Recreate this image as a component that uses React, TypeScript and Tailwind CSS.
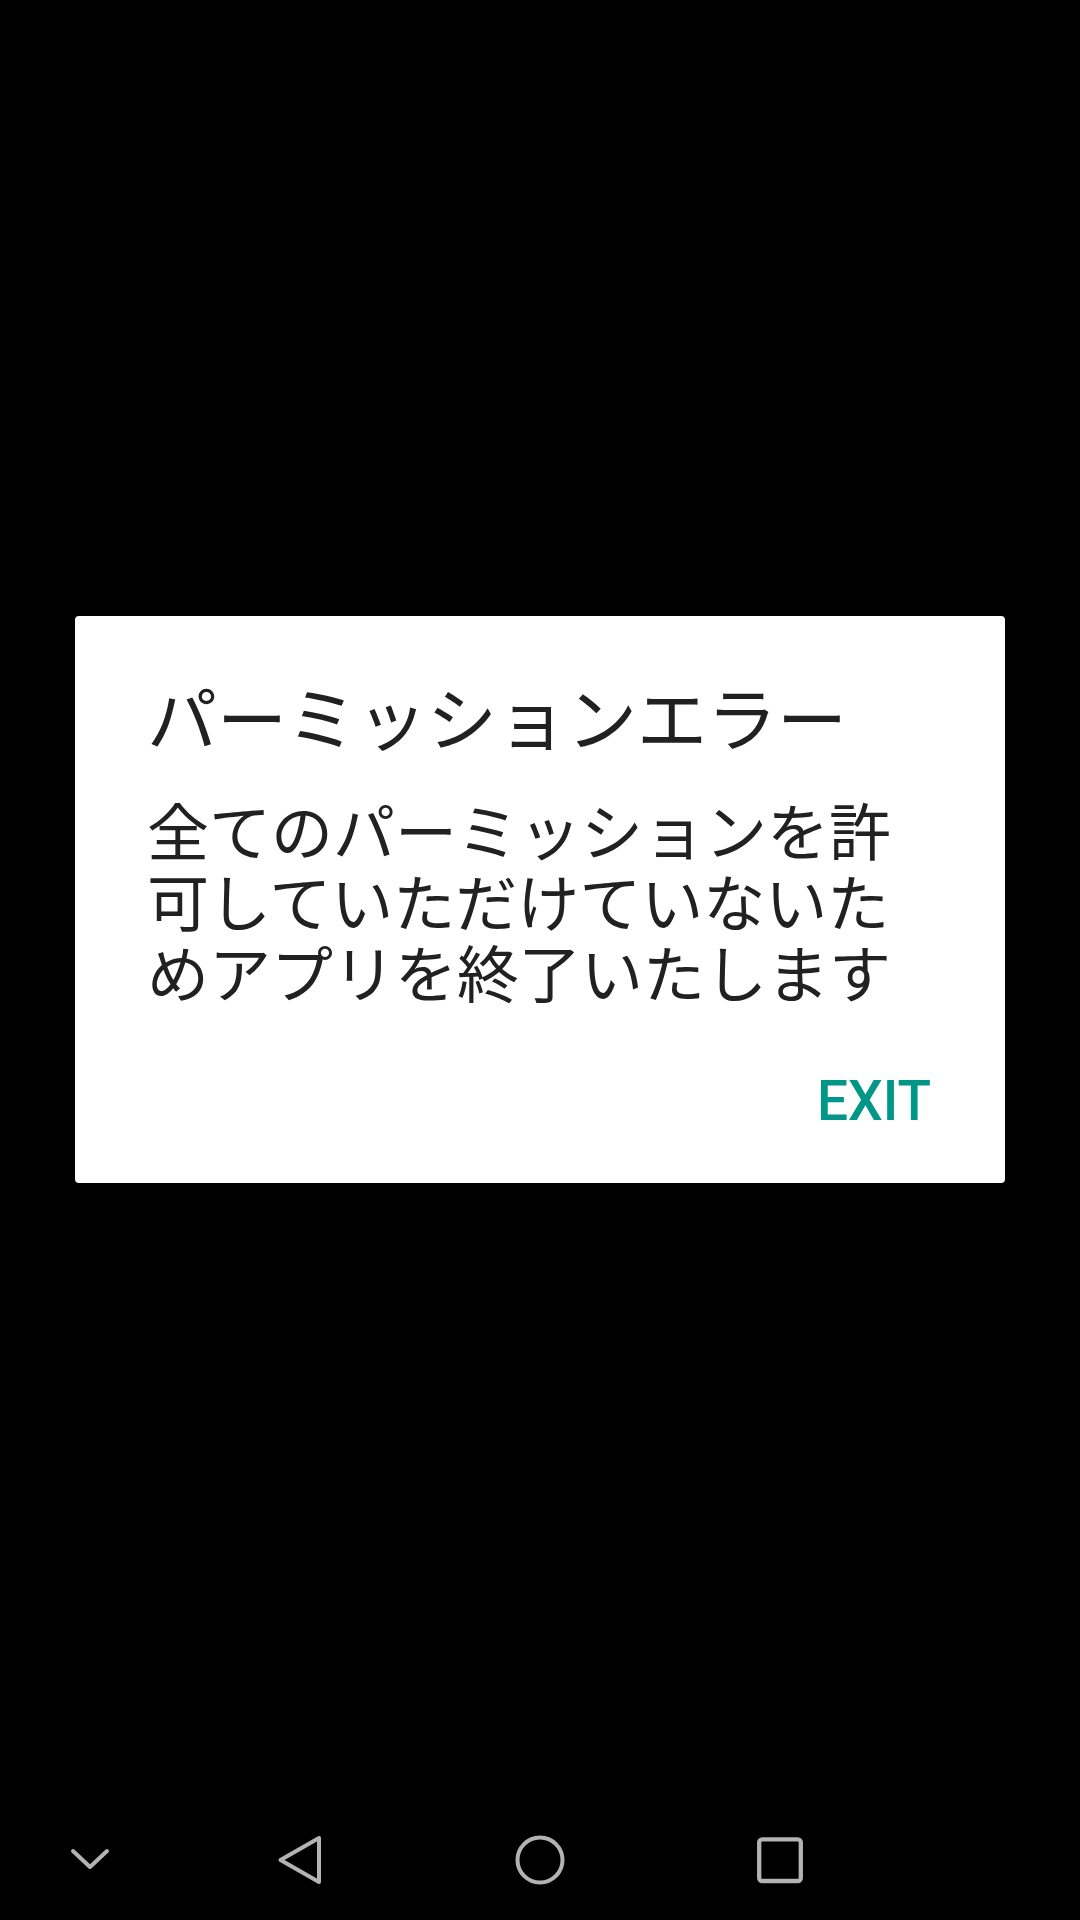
import React from "react";

function NavBar() {
  const c = "#b3b3b3";
  return (
    <div className="h-[120px] flex items-center pl-[70px]">
      <svg width="40" height="40" viewBox="0 0 40 40" className="overflow-visible">
        <polyline points="3,11 20,27 37,11" fill="none" stroke={c} strokeWidth="4" strokeLinecap="round" strokeLinejoin="round" />
      </svg>
      <div className="ml-[166px] flex items-center gap-[192px]">
        <svg width="48" height="48" viewBox="0 0 48 48" className="overflow-visible">
          <polygon points="4.5,24 43,2 43,46" fill="none" stroke={c} strokeWidth="4" strokeLinejoin="round" />
        </svg>
        <svg width="48" height="48" viewBox="0 0 48 48" className="overflow-visible">
          <circle cx="24" cy="24" r="22.5" fill="none" stroke={c} strokeWidth="4" />
        </svg>
        <svg width="48" height="48" viewBox="0 0 48 48" className="overflow-visible">
          <rect x="3.2" y="3.3" width="41.6" height="41.7" rx="3" fill="none" stroke={c} strokeWidth="4.3" />
        </svg>
      </div>
    </div>
  );
}

export default function App() {
  return (
    <div className="w-[1080px] h-[1920px] bg-black flex flex-col overflow-hidden">
      <div className="flex-1 pt-[616px] pl-[75px]">
        <div
          className="w-[930px] h-[567px] bg-white rounded-[4px] flex flex-col pl-[72px] pr-[72px] pt-[64px]"
          style={{ fontFamily: '"Noto Sans CJK JP", "Noto Sans", sans-serif' }}
        >
          <div className="text-[70px] leading-[72px] text-[#212121] whitespace-nowrap">
            パーミッションエラー
          </div>
          <div className="mt-[42px] text-[62px] leading-[71px] text-[#212121]">
            全てのパーミッションを許可していただけていないためアプリを終了いたします
          </div>
          <div className="mt-[66px] flex justify-end pr-[2px]">
            <span
              className="text-[55px] leading-[56px] font-medium text-[#009688]"
              style={{ fontFamily: 'Roboto, "Noto Sans", sans-serif' }}
            >
              EXIT
            </span>
          </div>
        </div>
      </div>
      <NavBar />
    </div>
  );
}
